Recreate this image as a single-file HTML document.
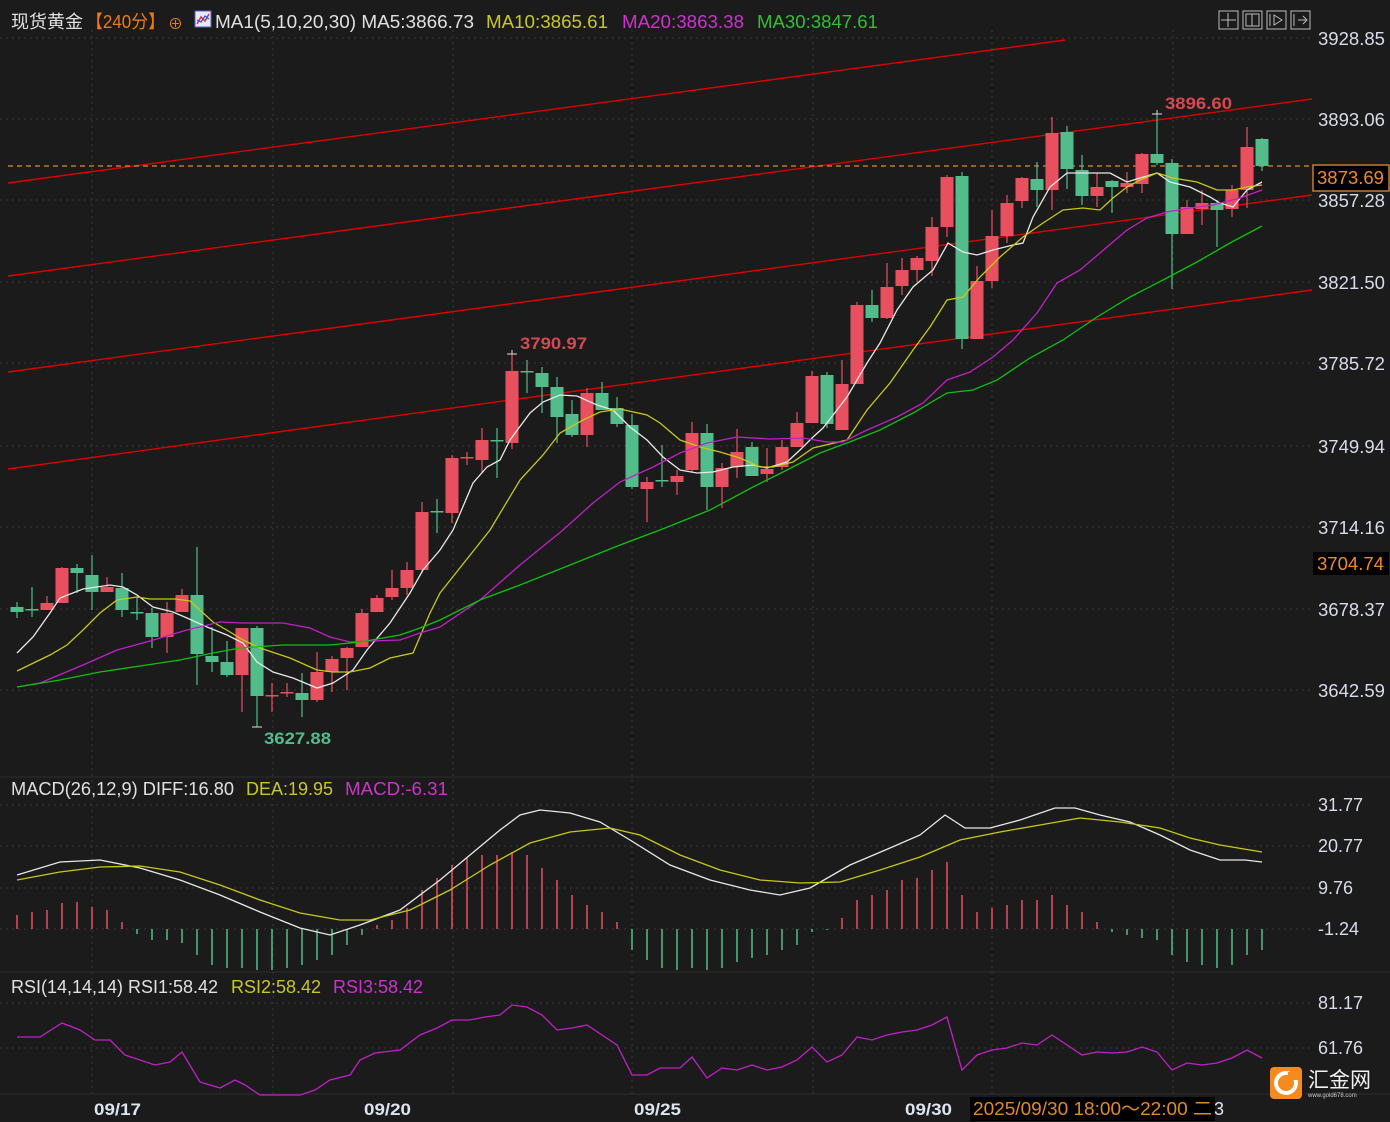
<!DOCTYPE html>
<html><head><meta charset="utf-8">
<style>
html,body{margin:0;padding:0;background:#1b1b1b;}
body{width:1390px;height:1122px;overflow:hidden;position:relative;font-family:"Liberation Sans","Noto Sans CJK SC",sans-serif;}
svg{position:absolute;left:0;top:0;}
.t{font-family:"Liberation Sans","Noto Sans CJK SC",sans-serif;}
</style></head><body>
<svg id="s" width="1390" height="1122" xmlns="http://www.w3.org/2000/svg">
<rect width="1390" height="1122" fill="#1b1b1b"/>
<g id="grid" stroke="#3a3a3a" stroke-dasharray="2,4" stroke-width="1"></g>
<line x1="0" y1="777" x2="1390" y2="777" stroke="#2e2e2e"/>
<line x1="0" y1="972" x2="1390" y2="972" stroke="#2e2e2e"/>
<line x1="0" y1="1094" x2="1390" y2="1094" stroke="#2e2e2e"/>
<g id="chan" stroke="#e00000" stroke-width="1.4" fill="none">
<line x1="8" y1="183" x2="1065" y2="40"/>
<line x1="8" y1="276" x2="1312" y2="99"/>
<line x1="8" y1="372" x2="1312" y2="195"/>
<line x1="8" y1="469" x2="1312" y2="290"/>
</g>
<line x1="8" y1="166" x2="1312" y2="166" stroke="#d98a30" stroke-dasharray="5,4" stroke-width="1.3"/>
<g id="candles"></g>
<g id="mas" fill="none" stroke-width="1.3"></g>
<g id="macd"></g>
<g id="rsi" fill="none"></g>
<g class="t" font-size="18">
<text x="11" y="28" fill="#e0e0e0" textLength="72" lengthAdjust="spacingAndGlyphs">现货黄金</text>
<text x="86" y="28" fill="#f07a10" textLength="79" lengthAdjust="spacingAndGlyphs">【240分】</text>
<text x="168" y="29" fill="#f07a10" font-size="15">⊕</text>
<rect x="195" y="11" width="16" height="16" fill="#e8e8f8" stroke="#5060d0"/>
<polyline points="197,24 201,17 205,21 209,14" stroke="#e03030" fill="none" stroke-width="1.5"/>
<polyline points="197,20 201,22 205,16 209,19" stroke="#3050e0" fill="none" stroke-width="1.2"/>
<text x="215" y="28" fill="#e0e0e0" textLength="259" lengthAdjust="spacingAndGlyphs">MA1(5,10,20,30) MA5:3866.73</text>
<text x="486" y="28" fill="#c8c820" textLength="122" lengthAdjust="spacingAndGlyphs">MA10:3865.61</text>
<text x="622" y="28" fill="#d030d0" textLength="122" lengthAdjust="spacingAndGlyphs">MA20:3863.38</text>
<text x="757" y="28" fill="#30c030" textLength="121" lengthAdjust="spacingAndGlyphs">MA30:3847.61</text>
</g>
<g stroke="#bbb" fill="none" stroke-width="1">
<rect x="1219" y="11" width="19" height="18"/><rect x="1243" y="11" width="19" height="18"/><rect x="1267" y="11" width="19" height="18"/><rect x="1291" y="11" width="19" height="18"/>
<path d="M1228 13v14M1221 20h15"/><path d="M1246 14h13v12h-13zM1252 14v12"/><path d="M1270 14v12M1274 15l8 5l-8 5z"/><path d="M1294 14v12M1298 20h8M1303 16l4 4l-4 4"/>
</g>
<g class="t" font-size="18" fill="#d8dce8">
<text x="1318" y="45" textLength="67" lengthAdjust="spacingAndGlyphs">3928.85</text>
<text x="1318" y="126" textLength="67" lengthAdjust="spacingAndGlyphs">3893.06</text>
<text x="1318" y="207" textLength="67" lengthAdjust="spacingAndGlyphs">3857.28</text>
<text x="1318" y="289" textLength="67" lengthAdjust="spacingAndGlyphs">3821.50</text>
<text x="1318" y="370" textLength="67" lengthAdjust="spacingAndGlyphs">3785.72</text>
<text x="1318" y="453" textLength="67" lengthAdjust="spacingAndGlyphs">3749.94</text>
<text x="1318" y="534" textLength="67" lengthAdjust="spacingAndGlyphs">3714.16</text>
<text x="1318" y="616" textLength="67" lengthAdjust="spacingAndGlyphs">3678.37</text>
<text x="1318" y="697" textLength="67" lengthAdjust="spacingAndGlyphs">3642.59</text>
</g>
<rect x="1313" y="165" width="76" height="26" fill="#000" stroke="#c77a30" stroke-width="1.5"/>
<text x="1317" y="184" class="t" font-size="18" fill="#f08a20" textLength="67" lengthAdjust="spacingAndGlyphs">3873.69</text>
<rect x="1313" y="552" width="76" height="23" fill="#000"/>
<text x="1317" y="570" class="t" font-size="18" fill="#f08a20" textLength="67" lengthAdjust="spacingAndGlyphs">3704.74</text>
<g class="t" font-size="17" font-weight="bold">
<text x="1165" y="109" fill="#d84850" textLength="67" lengthAdjust="spacingAndGlyphs">3896.60</text>
<text x="520" y="349" fill="#d84850" textLength="67" lengthAdjust="spacingAndGlyphs">3790.97</text>
<text x="264" y="744" fill="#52bd8a" textLength="67" lengthAdjust="spacingAndGlyphs">3627.88</text>
</g>
<g stroke="#ddd" stroke-width="1">
<path d="M1152 114h10M1157 110v4"/><path d="M507 354h10M512 350v4"/><path d="M252 727h10"/>
</g>
<g class="t" font-size="18">
<text x="11" y="795" fill="#e0e0e0" textLength="223" lengthAdjust="spacingAndGlyphs">MACD(26,12,9) DIFF:16.80</text>
<text x="246" y="795" fill="#c8c820" textLength="87" lengthAdjust="spacingAndGlyphs">DEA:19.95</text>
<text x="345" y="795" fill="#d030d0" textLength="103" lengthAdjust="spacingAndGlyphs">MACD:-6.31</text>
<text x="11" y="993" fill="#e0e0e0" textLength="207" lengthAdjust="spacingAndGlyphs">RSI(14,14,14) RSI1:58.42</text>
<text x="231" y="993" fill="#c8c820" textLength="90" lengthAdjust="spacingAndGlyphs">RSI2:58.42</text>
<text x="333" y="993" fill="#d030d0" textLength="90" lengthAdjust="spacingAndGlyphs">RSI3:58.42</text>
</g>
<g class="t" font-size="18" fill="#d8dce8">
<text x="1318" y="811">31.77</text>
<text x="1318" y="852">20.77</text>
<text x="1318" y="894">9.76</text>
<text x="1318" y="935">-1.24</text>
<text x="1318" y="1009">81.17</text>
<text x="1318" y="1054">61.76</text>
</g>
<g class="t" font-size="17" font-weight="bold" fill="#dde4f0">
<text x="94" y="1115" textLength="47" lengthAdjust="spacingAndGlyphs">09/17</text>
<text x="364" y="1115" textLength="47" lengthAdjust="spacingAndGlyphs">09/20</text>
<text x="634" y="1115" textLength="47" lengthAdjust="spacingAndGlyphs">09/25</text>
<text x="905" y="1115" textLength="47" lengthAdjust="spacingAndGlyphs">09/30</text>
</g>
<rect x="970" y="1097" width="245" height="24" fill="#000"/>
<text x="973" y="1115" class="t" font-size="18" fill="#e08a20" textLength="239" lengthAdjust="spacingAndGlyphs">2025/09/30 18:00～22:00 二</text>
<text x="1214" y="1115" class="t" font-size="18" fill="#dde4f0">3</text>
<rect x="1270" y="1067" width="32" height="32" rx="4" fill="#f58a1f"/>
<circle cx="1286" cy="1083" r="10" fill="none" stroke="#fff" stroke-width="4"/>
<rect x="1288" y="1072" width="10" height="8" fill="#f58a1f"/>
<text x="1308" y="1087" class="t" font-size="21" fill="#f0f0f0">汇金网</text>
<text x="1308" y="1097" class="t" font-size="6" fill="#ccc">www.gold678.com</text>
</svg>
<script>
var NS="http://www.w3.org/2000/svg";
function el(p,t,a){var e=document.createElementNS(NS,t);for(var k in a)e.setAttribute(k,a[k]);p.appendChild(e);return e;}
var g=document.getElementById('grid');
[38,119,200,282,363,446,527,609,690,805,846,888,929,1003,1048].forEach(function(y){el(g,'line',{x1:0,y1:y,x2:1312,y2:y});});
[92,273,453,632,813,992,1173].forEach(function(x){el(g,'line',{x1:x,y1:30,x2:x,y2:1094});});
var R="#e9505f",G="#52bd8a";
var C=[[17,602,618,607,612,'g'],[32,587,617,609,609,'g'],[47,596,610,603,610,'r'],[62,567,603,568,603,'r'],[77,564,593,568,573,'g'],[92,555,610,575,592,'g'],[107,577,592,587,592,'r'],[122,573,617,588,610,'g'],[137,597,620,612,612,'g'],[152,608,648,613,637,'g'],[167,602,653,613,637,'r'],[182,589,612,595,612,'r'],[197,547,685,595,654,'g'],[212,627,672,656,662,'g'],[227,641,677,662,675,'g'],[242,628,712,628,675,'r'],[257,626,727,628,696,'g'],[272,683,712,695,695,'r'],[287,683,697,692,692,'r'],[302,673,717,693,700,'g'],[317,652,702,672,700,'r'],[332,656,692,659,672,'r'],[347,647,690,648,658,'r'],[362,609,647,613,647,'r'],[377,595,612,598,612,'r'],[392,570,600,588,597,'r'],[407,562,595,570,588,'r'],[422,502,573,512,570,'r'],[437,499,533,511,511,'g'],[452,455,523,458,513,'r'],[467,452,465,457,457,'r'],[482,428,473,440,460,'r'],[497,428,478,440,440,'g'],[512,354,449,371,443,'r'],[527,360,393,371,371,'g'],[542,367,413,373,387,'g'],[557,377,443,387,417,'g'],[572,400,437,414,435,'g'],[587,388,447,393,435,'r'],[602,382,410,393,410,'g'],[617,397,427,408,424,'g'],[632,414,489,425,487,'g'],[647,477,522,482,489,'r'],[662,445,487,480,480,'g'],[677,470,495,476,482,'r'],[692,422,472,433,470,'r'],[707,424,510,433,487,'g'],[722,463,508,468,487,'r'],[737,429,478,452,467,'r'],[752,442,476,447,476,'g'],[767,448,482,469,474,'r'],[782,440,470,447,467,'r'],[797,412,447,423,447,'r'],[812,371,423,376,423,'r'],[827,372,428,375,424,'g'],[842,360,430,384,430,'r'],[857,302,384,305,384,'r'],[872,290,322,305,318,'g'],[887,263,319,287,318,'r'],[902,258,295,270,286,'r'],[917,256,282,258,270,'r'],[932,217,276,227,261,'r'],[947,175,237,177,227,'r'],[962,172,349,176,339,'g'],[977,266,339,281,339,'r'],[992,210,288,236,281,'r'],[1007,195,243,203,236,'r'],[1022,177,208,178,201,'r'],[1037,162,207,179,190,'g'],[1052,117,210,133,190,'r'],[1067,126,189,132,169,'g'],[1082,155,205,170,196,'g'],[1097,173,207,187,196,'r'],[1112,180,213,181,187,'g'],[1127,172,193,183,187,'r'],[1142,153,193,154,184,'r'],[1157,114,165,154,163,'g'],[1172,159,289,163,234,'g'],[1187,200,234,207,234,'r'],[1202,190,225,203,209,'r'],[1217,200,247,203,210,'g'],[1232,185,217,190,209,'r'],[1247,127,208,147,190,'r'],[1262,138,171,139,166,'g']];
var cg=document.getElementById('candles');
C.forEach(function(c){var col=c[5]=='r'?R:G;
el(cg,'line',{x1:c[0],y1:c[1],x2:c[0],y2:c[2],stroke:col,'stroke-width':1.2});
var h=Math.max(c[4]-c[3],1.5);el(cg,'rect',{x:c[0]-6.5,y:c[3],width:13,height:h,fill:col});});
function pl(p,pts,col,w){el(p,'polyline',{points:pts,stroke:col,'stroke-width':w||1.3,fill:'none'});}
var m=document.getElementById('mas');
pl(m,"17,653 33,637 50,613 60,598 83,589 110,585 123,587 137,595 153,607 173,612 187,618 207,627 227,635 243,643 257,662 273,672 293,678 317,688 333,683 353,670 367,650 390,623 410,593 423,570 440,550 453,530 473,483 487,467 500,460 510,440 530,413 543,402 560,395 577,396 597,405 613,410 630,427 647,440 663,457 680,470 697,473 713,472 733,467 753,465 767,468 787,462 800,450 813,437 823,428 847,397 867,363 880,343 897,310 913,287 933,270 948,243 963,252 977,255 993,250 1013,245 1023,243 1033,217 1050,187 1067,173 1093,173 1110,173 1127,182 1140,178 1157,173 1170,182 1190,187 1210,197 1220,203 1233,207 1247,190 1262,182","#e8e8e8");
pl(m,"17,671 50,655 67,645 83,630 100,613 117,600 137,597 150,599 175,599 190,601 213,622 230,632 243,640 260,648 290,658 317,670 333,672 350,672 370,668 390,658 413,653 430,613 440,593 490,530 520,480 543,455 560,433 583,420 600,412 620,409 647,415 660,423 680,440 700,447 720,452 740,458 760,467 773,467 793,462 813,448 847,440 867,410 890,383 913,350 930,327 947,300 963,297 980,277 1000,257 1023,237 1043,223 1063,210 1083,208 1100,210 1113,198 1127,187 1140,180 1157,173 1173,178 1197,182 1217,190 1233,190 1247,187 1262,185","#c8c818");
pl(m,"17,687 40,683 83,665 117,650 150,641 187,630 220,622 243,623 283,623 310,628 330,637 350,642 370,641 400,640 420,633 440,627 480,600 520,565 563,530 593,503 620,482 653,467 680,453 707,443 737,437 770,439 803,438 827,442 843,442 867,430 897,417 923,403 947,380 970,372 993,357 1013,340 1037,313 1057,283 1080,270 1100,253 1127,230 1147,218 1167,212 1190,208 1213,205 1240,198 1262,190","#c020c8");
pl(m,"17,687 60,680 100,672 140,666 180,660 213,653 240,648 283,645 330,645 360,642 400,635 420,628 440,620 480,600 520,585 570,565 620,545 660,530 710,510 753,487 787,470 820,453 847,443 880,430 913,413 947,393 973,390 997,380 1030,358 1063,340 1097,317 1130,297 1163,280 1197,262 1230,243 1262,226","#10c010");
var mg=document.getElementById('macd');
var B=[[17,915],[32,912],[47,910],[62,903],[77,902],[92,907],[107,910],[122,922],[137,934],[152,940],[167,940],[182,943],[197,955],[212,965],[227,968],[242,968],[257,970],[272,970],[287,968],[302,965],[317,960],[332,955],[347,945],[362,935],[377,925],[392,920],[407,908],[422,890],[437,878],[452,865],[467,858],[482,855],[497,855],[512,852],[527,855],[542,868],[557,880],[572,895],[587,905],[602,912],[617,922],[632,950],[647,960],[662,968],[677,970],[692,968],[707,970],[722,968],[737,962],[752,958],[767,955],[782,950],[797,945],[812,932],[827,930],[842,918],[857,900],[872,895],[887,890],[902,880],[917,878],[932,870],[947,862],[962,895],[977,912],[992,908],[1007,905],[1022,900],[1037,900],[1052,895],[1067,905],[1082,912],[1097,922],[1112,932],[1127,935],[1142,938],[1157,940],[1172,955],[1187,962],[1202,965],[1217,968],[1232,965],[1247,955],[1262,950]];
B.forEach(function(b){el(mg,'line',{x1:b[0],y1:929,x2:b[0],y2:b[1],stroke:b[1]<929?R:G,'stroke-width':1.5});});
pl(mg,"17,875 60,862 100,860 140,868 180,880 220,895 260,912 300,928 330,935 360,925 400,910 440,880 470,855 500,830 520,815 540,810 570,813 600,822 630,840 670,865 710,880 750,890 780,895 810,888 850,865 890,848 920,835 945,815 965,828 990,828 1020,820 1055,808 1075,808 1100,815 1130,822 1160,835 1190,850 1220,860 1245,860 1262,862","#e8e8e8");
pl(mg,"17,880 60,872 100,867 140,866 180,872 220,885 260,900 300,913 340,920 370,920 410,910 450,890 490,865 530,843 570,832 610,828 640,835 680,855 720,870 760,880 800,883 840,882 880,870 920,857 960,840 1000,832 1040,825 1080,818 1120,822 1160,828 1190,838 1220,845 1262,852","#c8c818");
pl(document.getElementById('rsi'),"17,1037 40,1037 62,1023 80,1030 95,1040 110,1040 125,1055 140,1060 155,1065 170,1062 182,1052 200,1082 220,1088 235,1080 245,1085 260,1095 300,1095 315,1090 330,1080 350,1075 360,1060 375,1053 400,1050 420,1035 437,1028 452,1020 470,1020 485,1017 500,1015 512,1005 527,1007 542,1015 557,1030 572,1028 587,1025 602,1035 617,1045 632,1075 647,1075 660,1068 680,1068 692,1057 707,1078 722,1068 737,1070 752,1065 767,1070 782,1067 797,1060 812,1047 827,1062 842,1055 857,1037 872,1040 887,1035 902,1032 917,1030 932,1025 947,1017 962,1070 977,1055 992,1050 1007,1048 1022,1043 1037,1045 1052,1035 1067,1045 1082,1055 1097,1052 1112,1053 1127,1052 1142,1047 1157,1052 1172,1070 1187,1063 1202,1065 1217,1063 1232,1058 1247,1050 1262,1058","#c020c8");
</script>
</body></html>
